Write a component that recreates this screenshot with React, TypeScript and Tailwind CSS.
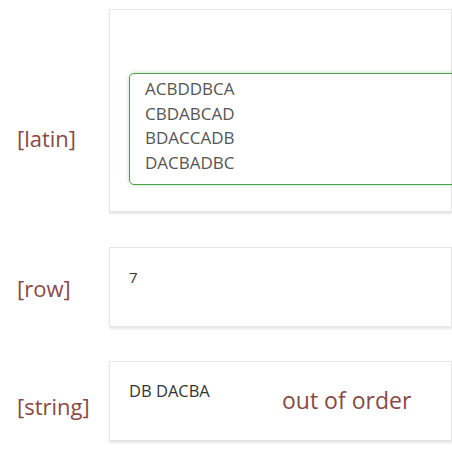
const label = "w-[109px] shrink-0 pl-[17px] text-[22px] text-[#8a4a44]";
const card =
  "flex-1 border border-[#e6e6e6] bg-white shadow-[0_2px_2px_rgba(0,0,0,0.1)]";

export default function App() {
  return (
    <div className="h-[473px] w-[452px] overflow-hidden bg-white pt-[9px] font-['Open_Sans',sans-serif]">
      <div className="flex">
        <div className={`${label} pt-[113px]`}>[latin]</div>
        <div className={`${card} h-[203px] pl-[19px] pt-[63px]`}>
          <div className="mr-[-20px] h-[112px] rounded-[5px] border border-[#48a048] py-[3px] pl-[15px] text-[17px] leading-[24.5px] text-[#555] shadow-[0_0_4px_rgba(60,150,60,0.35)]">
            <div>ACBDDBCA</div>
            <div>CBDABCAD</div>
            <div>BDACCADB</div>
            <div>DACBADBC</div>
          </div>
        </div>
      </div>

      <div className="mt-[35px] flex">
        <div className={`${label} pt-[25px]`}>[row]</div>
        <div className={`${card} h-[80px] pl-[19px] pt-[18px] text-[15px] text-[#333]`}>7</div>
      </div>

      <div className="mt-[34px] flex">
        <div className={`${label} pt-[29px]`}>[string]</div>
        <div className={`${card} flex h-[80px] pl-[19px] pt-[17px]`}>
          <span className="w-[153px] text-[16.5px] text-[#333]">DB DACBA</span>
          <span className="mt-[6px] text-[23px] leading-[30px] text-[#8a4a44]">out of order</span>
        </div>
      </div>
    </div>
  );
}
